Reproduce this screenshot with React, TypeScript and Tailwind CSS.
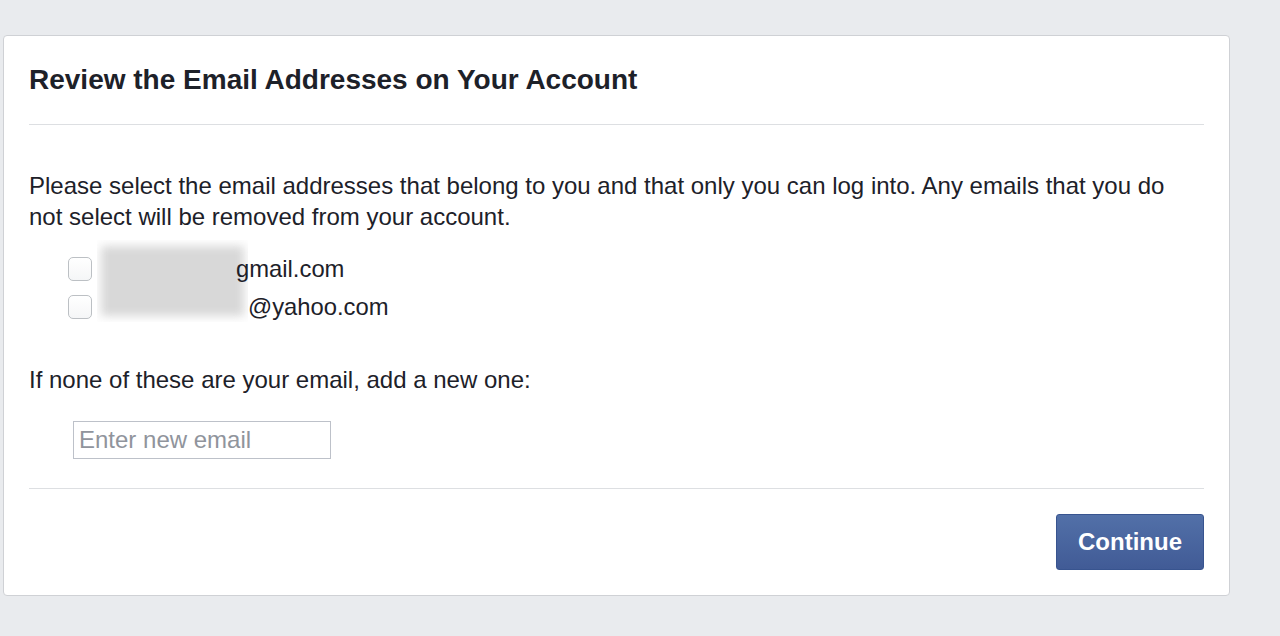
export default function App() {
  return (
    <div className="min-h-[636px] bg-[#e9ebee] pt-[35px] pl-[3px]" style={{ fontFamily: '"Liberation Sans", Arial, sans-serif' }}>
      <div className="w-[1227px] rounded-[4px] border border-[#cfd1d5] bg-white px-[25px] pb-[25px] text-[#1d2129]">
        <h1 className="pt-[29px] pb-[29px] text-[28px] font-bold leading-[30px] border-b border-[#dddfe2]">
          Review the Email Addresses on Your Account
        </h1>

        <p className="mt-[45px] text-[24px] leading-[31px]">
          Please select the email addresses that belong to you and that only you can log into. Any emails that you do
          <br />
          not select will be removed from your account.
        </p>

        <div className="relative mt-[18px] pl-[39px]">
          <div className="absolute left-[68px] top-[-10px] h-[82px] w-[151px] overflow-hidden bg-white">
            <div className="h-full w-full px-[4px] py-[6px]">
              <div className="h-full w-full bg-[repeating-linear-gradient(90deg,#d2d2d2_0px,#dedede_5px,#d2d2d2_10px)] blur-[5px]" />
            </div>
          </div>
          <div className="relative flex h-[38px] items-center">
            <span className="h-[24px] w-[24px] rounded-[5px] border border-[#bcc0c4] bg-gradient-to-b from-white to-[#f5f6f7]" />
            <span className="ml-[5px] inline-block w-[139px]" />
            <span className="text-[23.8px] text-[#1d2129]">gmail.com</span>
          </div>
          <div className="relative flex h-[38px] items-center">
            <span className="h-[24px] w-[24px] rounded-[5px] border border-[#bcc0c4] bg-gradient-to-b from-white to-[#f5f6f7]" />
            <span className="ml-[5px] inline-block w-[151px]" />
            <span className="text-[23.8px] text-[#1d2129]">@yahoo.com</span>
          </div>
        </div>

        <p className="mt-[39px] text-[24px] leading-[30px]">If none of these are your email, add a new one:</p>

        <div className="mt-[26px] pl-[44px]">
          <input
            type="text"
            placeholder="Enter new email"
            className="h-[38px] w-[258px] border border-[#bdc1c9] px-[5px] text-[24px] outline-none placeholder:text-[#90949c]"
          />
        </div>

        <div className="mt-[29px] border-t border-[#dddfe2]" />

        <div className="mt-[25px] flex justify-end">
          <button className="h-[56px] w-[148px] rounded-[3px] border border-[#38548f] bg-gradient-to-b from-[#5270a8] to-[#415b96] text-[24px] font-bold text-white">
            Continue
          </button>
        </div>
      </div>
    </div>
  );
}
